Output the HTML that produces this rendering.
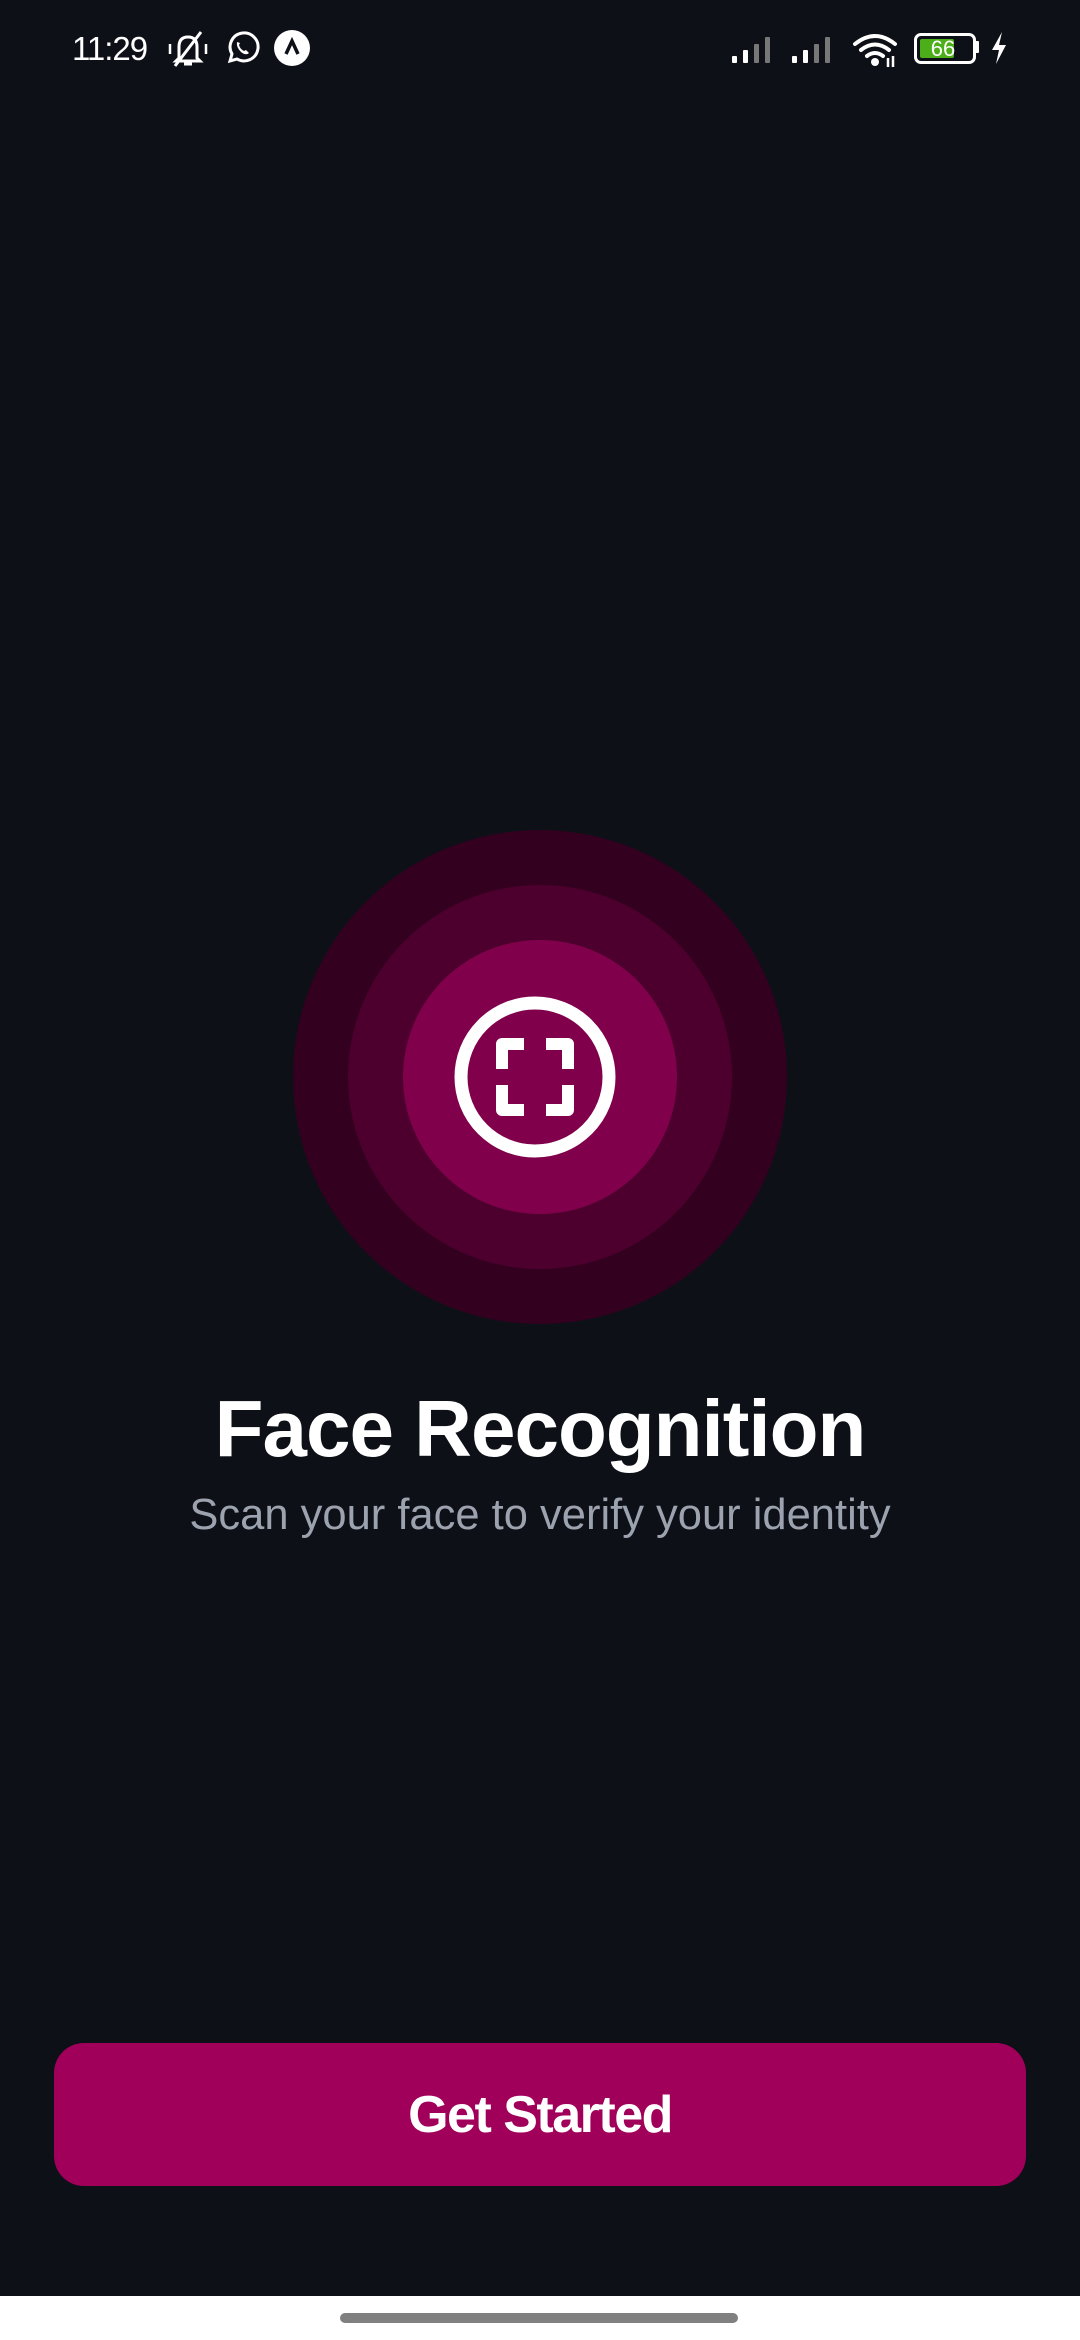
<!DOCTYPE html>
<html><head><meta charset="utf-8"><style>
html,body{margin:0;padding:0;}
body{width:1080px;height:2340px;background:#0d1017;position:relative;overflow:hidden;font-family:"Liberation Sans",sans-serif;}
.abs{position:absolute;}
.c{position:absolute;border-radius:50%;}
.t{position:absolute;left:0;width:1080px;text-align:center;white-space:nowrap;}
</style></head><body>
<!-- status bar -->
<div class="abs" style="left:72px;top:30px;font-size:33px;color:#fff;letter-spacing:-1px;">11:29</div>
<svg class="abs" style="left:165px;top:30px" width="46" height="38" viewBox="0 0 46 38">
<path d="M14 28 L14 17 Q14 7 23 7 Q32 7 32 17 L32 28 L35 31 L11 31 Z" fill="none" stroke="#fff" stroke-width="3"/>
<path d="M19 34 H27" stroke="#fff" stroke-width="3"/><path d="M10 36 L36 2" stroke="#fff" stroke-width="3"/>
<path d="M5 14 V24 M41 14 V24" stroke="#fff" stroke-width="2.5"/></svg>
<svg class="abs" style="left:224px;top:30px" width="36" height="36" viewBox="0 0 36 36">
<path d="M6 31 L8 24 A14 14 0 1 1 13 29 Z" fill="none" stroke="#fff" stroke-width="3"/>
<path d="M13 12 Q12 17 17 22 Q22 26 25 23 L22 20 L20 21 Q16 19 15 15 L16 13 Z" fill="#fff"/></svg>
<svg class="abs" style="left:274px;top:30px" width="36" height="36" viewBox="0 0 36 36">
<circle cx="18" cy="18" r="18" fill="#fff"/><path d="M12 24 L18 11 L24 24" fill="none" stroke="#0d1017" stroke-width="3.5"/></svg>
<svg class="abs" style="left:732px;top:34px" width="110" height="30" viewBox="0 0 110 30">
<g fill="#fff"><rect x="0" y="22" width="5" height="7" rx="1"/><rect x="11" y="16" width="5" height="13" rx="1"/></g>
<g fill="#777"><rect x="22" y="10" width="5" height="19" rx="1"/><rect x="33" y="3" width="5" height="26" rx="1"/></g>
<g fill="#fff"><rect x="60" y="22" width="5" height="7" rx="1"/><rect x="71" y="16" width="5" height="13" rx="1"/></g>
<g fill="#777"><rect x="82" y="10" width="5" height="19" rx="1"/><rect x="93" y="3" width="5" height="26" rx="1"/></g></svg>
<svg class="abs" style="left:852px;top:32px" width="48" height="36" viewBox="0 0 48 36">
<g fill="none" stroke="#fff" stroke-width="4" stroke-linecap="round"><path d="M3 12 Q23 -4 43 12"/><path d="M9 18 Q23 7 37 18"/><path d="M15 24 Q23 18 31 24"/></g>
<circle cx="23" cy="30" r="4" fill="#fff"/><path d="M36 26 V35 M41 24 V35" stroke="#fff" stroke-width="2.5"/></svg>
<div class="abs" style="left:914px;top:33px;width:56px;height:25px;border:3px solid #fff;border-radius:7px;box-sizing:content-box;"></div>
<div class="abs" style="left:920px;top:39px;width:34px;height:19px;background:#4caf1a;border-radius:2px;"></div>
<div class="abs" style="left:920px;top:36px;width:46px;text-align:center;font-size:22px;color:#fff;line-height:26px;">66</div>
<div class="abs" style="left:975px;top:41px;width:4px;height:12px;background:#fff;border-radius:1px;"></div>
<svg class="abs" style="left:990px;top:32px" width="18" height="32" viewBox="0 0 18 32"><path d="M12 0 L2 18 H9 L6 32 L16 13 H9 Z" fill="#fff"/></svg>

<!-- circles -->
<div class="c" style="left:293px;top:830px;width:494px;height:494px;background:#33001f;"></div>
<div class="c" style="left:348px;top:885px;width:384px;height:384px;background:#4d002e;"></div>
<div class="c" style="left:403px;top:940px;width:274px;height:274px;background:#80004c;"></div>
<svg class="abs" style="left:454px;top:996px" width="162" height="162" viewBox="0 0 162 162">
<circle cx="81" cy="81" r="74" fill="none" stroke="#fff" stroke-width="13"/>
<g fill="none" stroke="#fff" stroke-width="12" stroke-linejoin="round">
<path d="M48 73 V48 H70"/><path d="M92 48 H114 V73"/><path d="M48 89 V114 H70"/><path d="M92 114 H114 V89"/></g></svg>

<div class="t" style="top:1383px;font-size:80px;font-weight:bold;color:#fff;letter-spacing:-1px;line-height:92px;">Face Recognition</div>
<div class="t" style="top:1488px;font-size:43.5px;color:#9ca3af;letter-spacing:0;line-height:54px;">Scan your face to verify your identity</div>

<div class="abs" style="left:54px;top:2043px;width:972px;height:143px;background:#a0005a;border-radius:30px;"></div>
<div class="t" style="top:2084px;font-size:52px;font-weight:bold;color:#fff;line-height:62px;letter-spacing:-1.5px;">Get Started</div>

<div class="abs" style="left:0;top:2296px;width:1080px;height:44px;background:#fff;"></div>
<div class="abs" style="left:340px;top:2313px;width:398px;height:10px;background:#808080;border-radius:5px;"></div>
</body></html>
